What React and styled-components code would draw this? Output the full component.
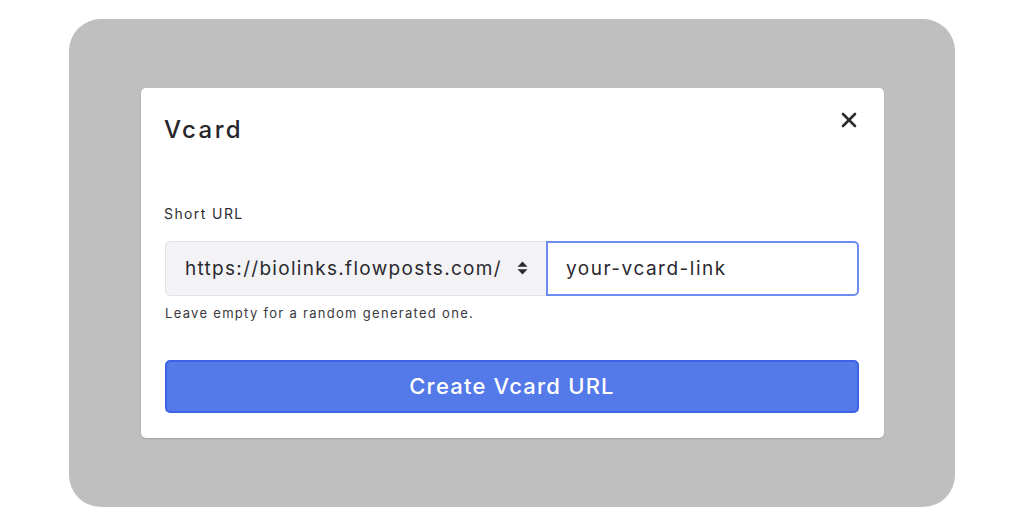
import styled, { createGlobalStyle } from "styled-components";

const Global = createGlobalStyle`
  html, body { margin: 0; padding: 0; background: #fff; }
  body { font-family: "Inter", "Noto Sans", sans-serif; }
`;

function CloseIcon() {
    return (
        <svg width="16" height="16" viewBox="0 0 16 16">
            <path d="M2 2 L14 14 M14 2 L2 14" stroke="#2b2b2f" strokeWidth="2.6" strokeLinecap="round" />
        </svg>
    );
}

function SortIcon() {
    return (
        <svg width="11" height="14" viewBox="0 0 11 14">
            <path d="M5.5 0.5 L10.5 5.8 L0.5 5.8 Z M5.5 13.5 L10.5 8.2 L0.5 8.2 Z" fill="#2b2b33" strokeLinejoin="round" />
        </svg>
    );
}

export default function App() {
    return (
        <Page>
            <Global />
            <Frame>
                <Modal>
                    <Header>
                        <Title>Vcard</Title>
                        <CloseButton><CloseIcon /></CloseButton>
                    </Header>
                    <Label>Short URL</Label>
                    <InputGroup>
                        <Select>
                            <span>https://biolinks.flowposts.com/</span>
                            <SortIcon />
                        </Select>
                        <TextInput>your-vcard-link</TextInput>
                    </InputGroup>
                    <Help>Leave empty for a random generated one.</Help>
                    <Button>Create Vcard URL</Button>
                </Modal>
            </Frame>
        </Page>
    );
}

const Page = styled.div`
    width: 1024px;
    height: 526px;
    display: flex;
    align-items: center;
    justify-content: center;
`;

const Frame = styled.div`
    width: 886px;
    height: 488px;
    background: #bfbfbf;
    border-radius: 32px;
    display: flex;
    align-items: center;
    justify-content: center;
`;

const Modal = styled.div`
    width: 743px;
    height: 350px;
    box-sizing: border-box;
    background: #fff;
    border-radius: 5px;
    box-shadow: 0 1px 2px rgba(0, 0, 0, 0.15);
    padding: 23px 25px 0 23px;
    margin-left: 1px;
    margin-top: -1px;
    color: #2b2b30;
`;

const Header = styled.div`
    display: flex;
    justify-content: space-between;
    align-items: flex-start;
    height: 94px;
`;

const Title = styled.h2`
    margin: 4px 0 0;
    font-size: 24px;
    font-weight: 500;
    line-height: 30px;
    letter-spacing: 2.4px;
    color: #26262b;
`;

const CloseButton = styled.div`
    margin: 1px 2px 0 0;
    display: flex;
`;

const Label = styled.div`
    font-size: 14px;
    line-height: 18px;
    letter-spacing: 1.4px;
    color: #2e2e33;
    margin-bottom: 18px;
`;

const InputGroup = styled.div`
    display: flex;
    height: 55px;
    margin-left: 1px;
`;

const Select = styled.div`
    width: 381px;
    box-sizing: border-box;
    background: #f3f3f6;
    border: 1px solid #e2e2e7;
    border-right: none;
    border-radius: 5px 0 0 5px;
    display: flex;
    align-items: center;
    justify-content: space-between;
    padding: 0 18px 0 19px;
    font-size: 19px;
    letter-spacing: 1.3px;
    color: #2a2a30;
`;

const TextInput = styled.div`
    flex: 1;
    box-sizing: border-box;
    border: 2px solid #6d8cf2;
    border-radius: 0 5px 5px 0;
    display: flex;
    align-items: center;
    padding-left: 18px;
    font-size: 19px;
    letter-spacing: 1.5px;
    color: #2a2a30;
`;

const Help = styled.div`
    font-size: 13px;
    line-height: 16px;
    letter-spacing: 1.3px;
    color: #3a3a40;
    margin: 9px 0 0 1px;
`;

const Button = styled.div`
    margin: 39px 0 0 1px;
    height: 53px;
    box-sizing: border-box;
    background: #5479e8;
    border: 2px solid #3d63e6;
    border-radius: 5px;
    display: flex;
    align-items: center;
    justify-content: center;
    font-size: 22px;
    font-weight: 500;
    letter-spacing: 1.2px;
    color: #fff;
`;
